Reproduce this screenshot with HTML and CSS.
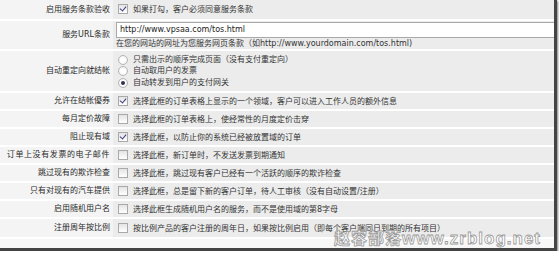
FILE: index.html
```html
<!DOCTYPE html>
<html>
  <head>
    <meta charset="utf-8">
    <title>订单设置</title>
    <link rel="stylesheet" href="styles.css">
  </head>
  <body>
    <div class="frame">
      <table class="form-table">
        <tr class="row-first">
          <td class="label">启用服务条款验收</td>
          <td class="field"><span class="check on"></span>如果打勾，客户必须同意服务条款</td>
        </tr>
        <tr class="row-url">
          <td class="label">服务URL条款</td>
          <td class="field">
            <div class="url-input">http://www.vpsaa.com/tos.html</div>
            <div class="hint">在您的网站的网址为您服务网页条款（如http://www.yourdomain.com/tos.html)</div>
          </td>
        </tr>
        <tr class="row-radio">
          <td class="label">自动重定向就结帐</td>
          <td class="field">
            <div class="radio-line"><span class="radio"></span>只需出示的顺序完成页面（没有支付重定向）</div>
            <div class="radio-line"><span class="radio"></span>自动取用户的发票</div>
            <div class="radio-line"><span class="radio on"></span>自动转发到用户的支付网关</div>
          </td>
        </tr>
        <tr>
          <td class="label">允许在结帐優券</td>
          <td class="field"><span class="check on"></span>选择此框的订单表格上显示的一个领域，客户可以进入工作人员的额外信息</td>
        </tr>
        <tr>
          <td class="label">每月定价故障</td>
          <td class="field"><span class="check"></span>选择此框的订单表格上，使经常性的月度定价击穿</td>
        </tr>
        <tr>
          <td class="label">阻止现有域</td>
          <td class="field"><span class="check on"></span>选择此框，以防止你的系统已经被放置域的订单</td>
        </tr>
        <tr>
          <td class="label wide">订单上没有发票的电子邮件</td>
          <td class="field"><span class="check"></span>选择此框，新订单时，不发送发票到期通知</td>
        </tr>
        <tr>
          <td class="label">跳过现有的欺诈检查</td>
          <td class="field"><span class="check"></span>选择此框，跳过现有客户已经有一个活跃的顺序的欺诈检查</td>
        </tr>
        <tr>
          <td class="label">只有对现有的汽车提供</td>
          <td class="field"><span class="check"></span>选择此框，总是留下新的客户订单，待人工审核（没有自动设置/注册）</td>
        </tr>
        <tr>
          <td class="label">启用随机用户名</td>
          <td class="field"><span class="check"></span>选择此框生成随机用户名的服务，而不是使用域的第8字母</td>
        </tr>
        <tr class="row-last">
          <td class="label">注册周年按比例</td>
          <td class="field"><span class="check"></span>按比例产品的客户注册的周年日，如果按比例启用（即每个客户端同日到期的所有项目）</td>
        </tr>
      </table>
      <div class="watermark"><span class="wm-cn">赵容部落</span>www.zrblog.net</div>
    </div>
  </body>
</html>
```

FILE: styles.css
```css
* {
  margin: 0;
  padding: 0;
  box-sizing: border-box;
}

body {
  font-family: "DejaVu Sans", "Noto Sans CJK SC", sans-serif;
  font-size: 8px;
  color: #333;
  background: #fff;
}

.frame {
  position: relative;
  width: 557px;
  height: 251px;
  padding-bottom: 10px;
  background: #f7f7f7;
  border-right: 3px solid #444;
  border-bottom: 3px solid #444;
  box-shadow: 1px 1px 2px rgba(0, 0, 0, 0.5);
}

.form-table {
  width: 554px;
  border-collapse: collapse;
}

.form-table td {
  height: 18px;
  border-bottom: 2px solid #fff;
  vertical-align: middle;
  line-height: 10px;
}

.label {
  width: 113px;
  padding-right: 3px;
  text-align: right;
  background: #f4f4f4;
  color: #2a2a2a;
  white-space: nowrap;
}

.label.wide {
  letter-spacing: 0.6px;
}

.field {
  padding-left: 5px;
  background: #ececec;
  white-space: nowrap;
}

.row-first td {
  height: 20px;
}

.row-url td {
  height: 30px;
}

.row-radio td {
  height: 42px;
}

.row-last td {
  height: 20px;
}

.check {
  display: inline-block;
  width: 10px;
  height: 10px;
  margin-right: 5px;
  vertical-align: -2px;
  border: 1px solid #a9a9a9;
  background: linear-gradient(#e4e4e4, #fff);
  position: relative;
}

.check.on::after {
  content: "";
  position: absolute;
  left: 2px;
  top: 0;
  width: 3px;
  height: 5px;
  border-right: 1.5px solid #3a3f7a;
  border-bottom: 1.5px solid #3a3f7a;
  transform: rotate(40deg);
}

.url-input {
  margin-left: -2px;
  margin-top: 1px;
  height: 16px;
  padding-left: 3px;
  line-height: 14px;
  background: #fff;
  border: 1px solid #a8a8a8;
  border-right: none;
  color: #222;
}

.hint {
  margin-left: -2px;
  margin-top: 1px;
  line-height: 10px;
}

.radio-line {
  display: flex;
  align-items: center;
  height: 11.5px;
}

.radio {
  display: inline-block;
  width: 10px;
  height: 10px;
  margin-right: 5px;
  border-radius: 50%;
  border: 1px solid #b5b5b5;
  background: radial-gradient(circle, #fff 40%, #e6e6e6);
  position: relative;
}

.radio.on::after {
  content: "";
  position: absolute;
  left: 2px;
  top: 2px;
  width: 4px;
  height: 4px;
  border-radius: 50%;
  background: #2d3350;
}

.watermark {
  position: absolute;
  left: 334px;
  top: 228px;
  font-family: "Liberation Sans", "Noto Sans CJK SC", sans-serif;
  font-size: 17px;
  font-weight: bold;
  letter-spacing: 1px;
  line-height: 18px;
  color: #fff;
  -webkit-text-stroke: 0.8px #9a9a9a;
  white-space: nowrap;
}

.wm-cn {
  font-family: "Noto Sans CJK SC", sans-serif;
  font-size: 16px;
  letter-spacing: 1px;
}
```
